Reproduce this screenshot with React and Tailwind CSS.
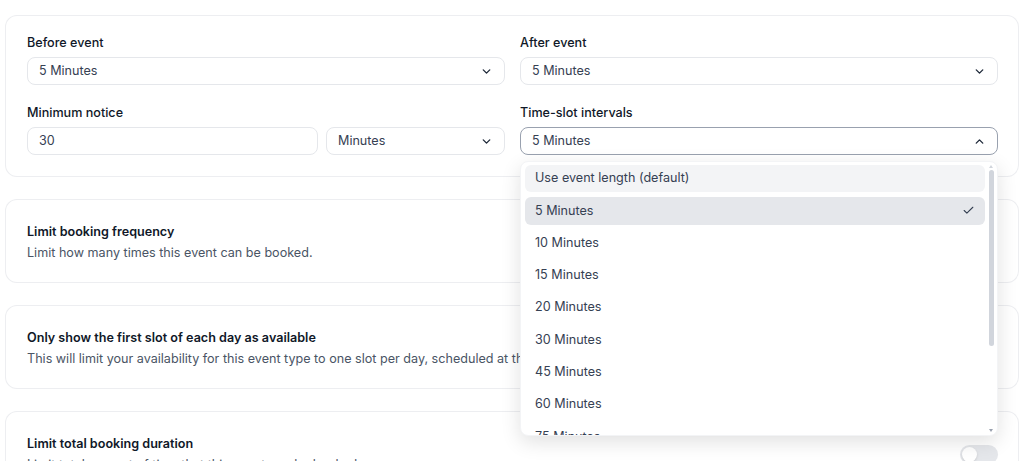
import React from "react";
import { ChevronDown, ChevronUp, Check } from "lucide-react";

const font = { fontFamily: "Inter, 'Noto Sans', sans-serif" };

function Select({ value, open }) {
  return (
    <div
      className={`flex h-7 items-center justify-between rounded-lg border bg-white px-[11px] text-[12.6px] text-gray-700 ${
        open ? "border-gray-400" : "border-gray-200"
      }`}
    >
      <span>{value}</span>
      {open ? (
        <ChevronUp size={13} strokeWidth={2.5} className="text-gray-800" />
      ) : (
        <ChevronDown size={13} strokeWidth={2.5} className="text-gray-800" />
      )}
    </div>
  );
}

function Field({ label, children }) {
  return (
    <div className="flex flex-col gap-[6px]">
      <div className="text-[12.6px] font-medium leading-4 text-gray-900">{label}</div>
      {children}
    </div>
  );
}

const options = [
  "Use event length (default)",
  "5 Minutes",
  "10 Minutes",
  "15 Minutes",
  "20 Minutes",
  "30 Minutes",
  "45 Minutes",
  "60 Minutes",
  "75 Minutes",
];

function IntervalMenu() {
  return (
    <div className="absolute left-0 right-0 top-full z-10 mt-[6px] flex h-[275px] overflow-hidden rounded-lg border border-gray-100 bg-white shadow-[0_6px_20px_rgba(0,0,0,0.12)]">
      <div className="flex flex-1 flex-col gap-[5px] pb-1 pl-1 pt-[3px]">
        {options.map((o, i) => (
          <div
            key={o}
            className={`flex h-[27.3px] shrink-0 items-center justify-between rounded-md px-[10px] text-[12.6px] text-gray-700 ${
              i === 0 ? "bg-gray-100" : i === 1 ? "bg-gray-200" : ""
            }`}
          >
            <span>{o}</span>
            {i === 1 && <Check size={13} strokeWidth={2} className="text-gray-700" />}
          </div>
        ))}
      </div>
      {/* scrollbar */}
      <div className="flex w-3 flex-col items-center py-[3px]">
        <div className="h-0 w-0 border-x-[2px] border-b-[3px] border-x-transparent border-b-gray-300" />
        <div className="mt-[2px] h-[176px] w-[5px] rounded-full bg-gray-300" />
        <div className="flex-1" />
        <div className="h-0 w-0 border-x-[2px] border-t-[3px] border-x-transparent border-t-gray-400" />
      </div>
    </div>
  );
}

function ToggleCard({ title, desc, toggle }) {
  return (
    <div className="flex items-center justify-between rounded-xl border border-gray-200/70 bg-white pb-[21px] pl-[21px] pr-[20px] pt-[24px]">
      <div className="flex flex-col gap-[5px]">
        <div className="text-[12.6px] font-semibold leading-4 text-gray-900">{title}</div>
        <div className="whitespace-nowrap text-[12.6px] leading-4 text-gray-600">{desc}</div>
      </div>
      {toggle && (
        <div className="flex h-[19px] w-[38px] shrink-0 items-center rounded-full bg-gray-200 p-[2px]">
          <div className="h-[15px] w-[15px] rounded-full bg-white shadow" />
        </div>
      )}
    </div>
  );
}

export default function App() {
  return (
    <div className="h-[461px] overflow-hidden bg-white" style={font}>
      <div className="flex flex-col gap-[22px] pl-[5px] pr-[5px] pt-[15px]">
        {/* buffer + notice settings */}
        <div className="rounded-xl border border-gray-200/70 bg-white pb-[21px] pl-[21px] pr-[20px] pt-[19px]">
          <div className="grid grid-cols-2 gap-x-[15px] gap-y-[20px]">
            <Field label="Before event">
              <Select value="5 Minutes" />
            </Field>
            <Field label="After event">
              <Select value="5 Minutes" />
            </Field>
            <Field label="Minimum notice">
              <div className="flex gap-2">
                <div className="flex h-7 flex-1 items-center rounded-lg border border-gray-200 px-[11px] text-[12.6px] text-gray-700">
                  30
                </div>
                <div className="w-[179px]">
                  <Select value="Minutes" />
                </div>
              </div>
            </Field>
            <Field label="Time-slot intervals">
              <div className="relative">
                <Select value="5 Minutes" open />
                <IntervalMenu />
              </div>
            </Field>
          </div>
        </div>

        <ToggleCard
          title="Limit booking frequency"
          desc="Limit how many times this event can be booked."
        />
        <ToggleCard
          title="Only show the first slot of each day as available"
          desc="This will limit your availability for this event type to one slot per day, scheduled at the earliest available time."
        />
        <ToggleCard
          title="Limit total booking duration"
          desc="Limit total amount of time that this event can be booked."
          toggle
        />
      </div>
    </div>
  );
}
